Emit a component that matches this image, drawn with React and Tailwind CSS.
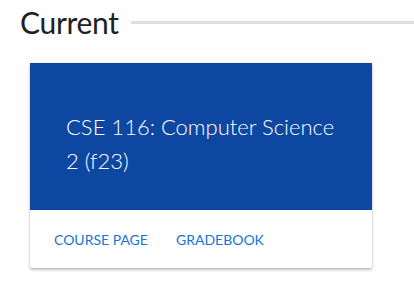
export default function App() {
  return (
    <div className="w-[414px] h-[289px] bg-white overflow-hidden" style={{ fontFamily: 'Lato, "Noto Sans", sans-serif' }}>
      <div className="flex items-center pl-5 pt-[2px]">
        <h2 className="text-[30px] leading-[40px] text-[#212121] font-normal tracking-[-0.3px]">Current</h2>
        <div className="flex-1 h-[3px] bg-[#dddddd] ml-[12px]" />
      </div>
      <div className="ml-[30px] mt-[21px] w-[342px] bg-white shadow-[0_2px_3px_rgba(0,0,0,0.25),0_0_2px_rgba(0,0,0,0.12)] rounded-[2px]">
        <div className="bg-[#0e47a1] h-[147px] pl-9 pt-[47px] pr-6">
          <div className="text-[22px] leading-[34px] text-white font-light">CSE 116: Computer Science 2 (f23)</div>
        </div>
        <div className="flex items-center h-[58px] px-6 gap-7">
          <span className="text-[14px] text-[#1a73d5] uppercase">Course Page</span>
          <span className="text-[14px] text-[#1a73d5] uppercase">Gradebook</span>
        </div>
      </div>
    </div>
  );
}
